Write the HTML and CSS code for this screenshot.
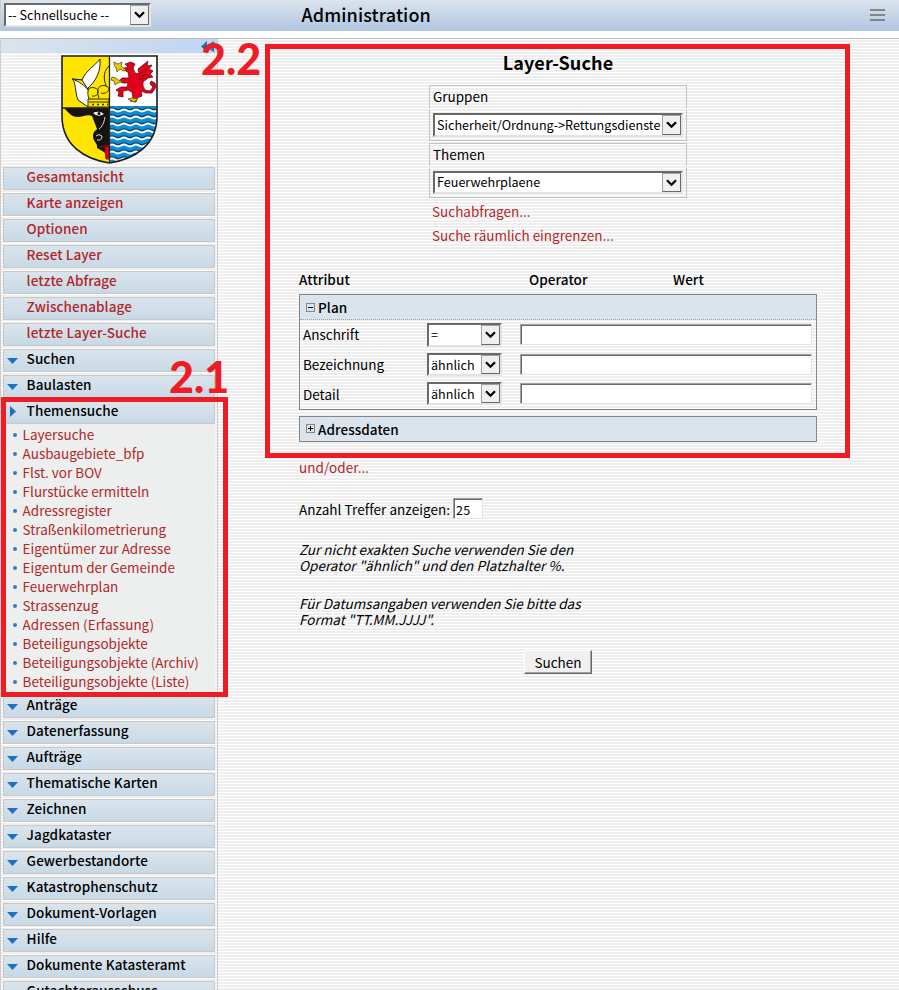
FILE: index.html
```html
<!DOCTYPE html>
<html lang="de">
<head>
<meta charset="utf-8">
<title>Administration</title>
<link rel="stylesheet" href="styles.css">
</head>
<body>
<svg class="defs" width="0" height="0"><defs>
<symbol id="chev" viewBox="0 0 11 8"><path d="M1 1.2 5.5 5.7 10 1.2" fill="none" stroke="#000" stroke-width="2.3"/></symbol>
<symbol id="down" viewBox="0 0 11 6"><path d="M0 0H11L5.5 6z" fill="#1f6fc4"/></symbol>
</defs></svg>
<header class="top">
  <div class="select quick"><span>-- Schnellsuche --</span><i><svg><use href="#chev"/></svg></i></div>
  <h1>Administration</h1>
  <div class="burger"><b></b><b></b><b></b></div>
</header>
<div class="body">
  <aside class="side">
    <div class="strip"><svg width="14" height="11" viewBox="0 0 14 11"><path d="M6 0 0 5.500 6 11V7.500H7L13 11V7L11 5.500 13 4V0L7 4V5H6z" fill="#1f6fc4"/></svg></div>
    <div class="crest">
      <svg width="98" height="110" viewBox="0 0 98 110">
        <defs><clipPath id="shield"><path d="M1 1H96V61C96 90 74 104 48.500 108C23 104 1 90 1 61z"/></clipPath></defs>
        <g clip-path="url(#shield)">
          <path d="M0 0H49V110H0z" fill="#ffe500"/><path d="M48 0H98V52H48z" fill="#fff"/><path d="M48 51H98V110H48z" fill="#0b8ed8"/>
          <g fill="none" stroke="#15405c" stroke-width="1.600">
            <path id="w" d="M48 54q3-1.800 6 0t6 0 6 0 6 0 6 0 6 0 6 0 6 0"/>
            <use href="#w" y="7"/><use href="#w" y="14"/><use href="#w" y="21"/><use href="#w" y="28"/><use href="#w" y="35"/><use href="#w" y="42"/><use href="#w" y="49"/>
          </g>
          <g fill="none" stroke="#fff" stroke-width="2">
            <path id="v" d="M48 55.500q3-1.800 6 0t6 0 6 0 6 0 6 0 6 0 6 0 6 0"/>
            <use href="#v" y="7"/><use href="#v" y="14"/><use href="#v" y="21"/><use href="#v" y="28"/><use href="#v" y="35"/><use href="#v" y="42"/><use href="#v" y="49"/>
          </g>
          <path d="M39 4C34 11 25 15 21 25L11 24C15 26 14 38 17 45L27 52 29 42 27 33C35 26 40 16 39 4z" fill="#fff" stroke="#222" stroke-width="1"/>
          <path d="M11 24C19 27 23 30 28 36L21 25z" fill="#ffe500" stroke="#222"/>
          <path d="M48 11C41 18 43 26 46 33" fill="none" stroke="#222"/>
          <path d="M27 44H48V52H27z" fill="#ffe500" stroke="#332d00"/>
          <path d="M28 44C25 35 28 31 34 33S37 42 31 41M38 43C34 33 39 29 45 31S46 40 40 38" fill="#ffe500" stroke="#332d00"/>
          <path d="M28 47H48" stroke="#332d00"/>
          <path d="M31 49.500H47" stroke="#332d00" stroke-width="1.500" stroke-dasharray="2 3"/>
          <path d="M3 53H48V103L43 97 36 93C37 88 32 87 32 81C32 76 36 75 36 74L31 61C27 59 22 62 17 62C10 62 7 57 3 53z" fill="#161413"/>
          <path d="M32 58q6-3 11 1q-6 4-11-1z" fill="#fff"/><circle cx="38" cy="58.500" r="1.500"/>
          <path d="M44 62C43 68 41 72 38 74M35 81q3-3 6 0q0 5-5 4" fill="none" stroke="#ddd" stroke-width="1"/>
          <path d="M44 92H48V104H45zM39 92l9-2" fill="#e30613" stroke="#b00" stroke-width="1"/>
          <path d="M64 9 70 7 74 9 72 13 74 18 78 19 77 14 82 10 87 6 86 11 91 10 88 14 92 16 89 19 92 22 87 23 82 27 82 31 84 35 89 36 92 32 89 29 90 26 94 28 95 32 91 38 85 38 80 36 81 41 76 43 75 47 69 46 72 43 71 37 67 35 62 36 62 42 57 41 58 37 55 35 60 32 66 32 67 28 62 28 58 26 61 23 68 23 67 17 60 14 67 12z" fill="#e3001b" stroke="#611" stroke-width=".8"/>
          <path d="M77 20l9-6M78 22l9-3M77 25l7-2" stroke="#711" stroke-width=".8"/>
          <path d="M53 7l4 2 4-2-1 4 5 4-2 1-4-2-3 3-1-4-2-3zM51 22l4 1 2 2 5 1-5 2-3 2-1-4-3-1zM67 44l4-1 6 1-4 3z" fill="#e8c600" stroke="#554600" stroke-width=".7"/>
        </g>
        <path d="M48.500 1V108M1 53H48" stroke="#222" stroke-width="1.300"/>
        <path d="M1 1H96V61C96 90 74 104 48.500 108C23 104 1 90 1 61z" fill="none" stroke="#1c1c1c" stroke-width="1.600"/>
      </svg>
    </div>
    <nav class="menu">
      <a class="item link">Gesamtansicht</a>
      <a class="item link">Karte anzeigen</a>
      <a class="item link">Optionen</a>
      <a class="item link">Reset Layer</a>
      <a class="item link">letzte Abfrage</a>
      <a class="item link">Zwischenablage</a>
      <a class="item link">letzte Layer-Suche</a>
      <a class="item"><svg><use href="#down"/></svg>Suchen</a>
      <a class="item"><svg><use href="#down"/></svg>Baulasten</a>
      <a class="item open"><svg viewBox="0 0 6 11"><path d="M0 0V11L6 5.500z" fill="#1f6fc4"/></svg>Themensuche</a>
      <ul class="sub">
        <li>Layersuche</li><li>Ausbaugebiete_bfp</li><li>Flst. vor BOV</li><li>Flurstücke ermitteln</li><li>Adressregister</li><li>Straßenkilometrierung</li><li>Eigentümer zur Adresse</li><li>Eigentum der Gemeinde</li><li>Feuerwehrplan</li><li>Strassenzug</li><li>Adressen (Erfassung)</li><li>Beteiligungsobjekte</li><li>Beteiligungsobjekte (Archiv)</li><li>Beteiligungsobjekte (Liste)</li>
      </ul>
      <a class="item"><svg><use href="#down"/></svg>Anträge</a>
      <a class="item"><svg><use href="#down"/></svg>Datenerfassung</a>
      <a class="item"><svg><use href="#down"/></svg>Aufträge</a>
      <a class="item"><svg><use href="#down"/></svg>Thematische Karten</a>
      <a class="item"><svg><use href="#down"/></svg>Zeichnen</a>
      <a class="item"><svg><use href="#down"/></svg>Jagdkataster</a>
      <a class="item"><svg><use href="#down"/></svg>Gewerbestandorte</a>
      <a class="item"><svg><use href="#down"/></svg>Katastrophenschutz</a>
      <a class="item"><svg><use href="#down"/></svg>Dokument-Vorlagen</a>
      <a class="item"><svg><use href="#down"/></svg>Hilfe</a>
      <a class="item"><svg><use href="#down"/></svg>Dokumente Katasteramt</a>
      <a class="item"><svg><use href="#down"/></svg>Gutachterausschuss</a>
    </nav>
  </aside>
  <main class="main">
    <h2>Layer-Suche</h2>
    <div class="groups">
      <div class="cap">Gruppen</div>
      <div class="cell"><div class="select wide"><span>Sicherheit/Ordnung-&gt;Rettungsdienste</span><i><svg><use href="#chev"/></svg></i></div></div>
      <div class="cap">Themen</div>
      <div class="cell second"><div class="select wide"><span>Feuerwehrplaene</span><i><svg><use href="#chev"/></svg></i></div></div>
      <a class="more">Suchabfragen...</a>
      <a class="more">Suche räumlich eingrenzen...</a>
    </div>
    <div class="heads"><b>Attribut</b><b>Operator</b><b>Wert</b></div>
    <section class="panel">
      <div class="ptitle dotted"><span class="sq"></span>Plan</div>
      <div class="row r1"><label>Anschrift</label><div class="select op"><span>=</span><i><svg><use href="#chev"/></svg></i></div><div class="input"></div></div>
      <div class="row r2"><label>Bezeichnung</label><div class="select op"><span>ähnlich</span><i><svg><use href="#chev"/></svg></i></div><div class="input"></div></div>
      <div class="row r3"><label>Detail</label><div class="select op"><span>ähnlich</span><i><svg><use href="#chev"/></svg></i></div><div class="input"></div></div>
    </section>
    <section class="panel"><div class="ptitle low"><span class="sq plus"></span>Adressdaten</div></section>
    <a class="andor">und/oder...</a>
    <div class="count"><span>Anzahl Treffer anzeigen:</span><div class="input num">25</div></div>
    <p>Zur nicht exakten Suche verwenden Sie den<br>Operator "ähnlich" und den Platzhalter %.</p>
    <p>Für Datumsangaben verwenden Sie bitte das<br>Format "TT.MM.JJJJ".</p>
    <button>Suchen</button>
  </main>
</div>
<div class="mark m1"><span>2.1</span></div>
<div class="mark m2"><span>2.2</span></div>
</body>
</html>
```
FILE: styles.css
```css
* { box-sizing: border-box; }
body { margin: 0; height: 990px; overflow: hidden; position: relative; font: 13.5px/18px "Noto Sans CJK JP", sans-serif; color: #000; }
.defs { position: absolute; }
h1, h2, p, ul { margin: 0; padding: 0; }
.top { height: 31px; display: flex; background: linear-gradient(#dae4ec, #b1c5e1); border-left: 1px solid #ccc; padding: 3px 14px 0 3px; }
.top h1 { font-size: 18px; font-weight: 500; line-height: 22px; margin-left: 150.5px; flex: 1; letter-spacing: 0.1px; }
.burger { width: 15px; padding-top: 6px; }
.burger b { display: block; height: 2px; background: #858585; margin-bottom: 3px; }
.select { display: flex; height: 24px; background: #fff; border: 2px solid #696969; border-right-color: #e3e3e3; border-bottom-color: #e3e3e3; font-size: 12.6px; line-height: 19px; }
.select span { flex: 1; padding-left: 2px; white-space: nowrap; overflow: hidden; }
.select i { width: 19px; height: 20px; background: #f0f0f0; border: 1px solid #a0a0a0; border-right-color: #696969; border-bottom-color: #696969; padding: 5px 0 0 3px; line-height: 0; flex: none; }
.select svg { width: 11px; height: 8px; }
.quick { width: 147px; }
.body { margin-top: 7px; height: 952px; border-top: 1px solid #bbb; border-left: 1px solid #ccc; display: flex; background: repeating-linear-gradient(#fff 0 1px, #eee 1px 3px); }
.side { width: 217px; border-right: 1px solid #ccc; overflow: hidden; flex: none; }
.strip { height: 14px; background: linear-gradient(90deg, #dae4ec, #c0d5f3); padding: 2px 0 0 200px; line-height: 0; }
.crest { height: 114px; padding: 2px 0 0 59.5px; line-height: 0; }
.menu { padding-left: 2px; }
.item { display: block; position: relative; width: 212px; height: 23px; margin-bottom: 3px; border: 1px solid #c8c8c8; background: linear-gradient(#dae4ec, #c7d9e6); padding-left: 22.6px; line-height: 16px; font-weight: 500; letter-spacing: 0.08px; }
.item svg { position: absolute; left: 3px; top: 8px; width: 11px; height: 6px; }
.open { margin-bottom: 0; }
.open svg { left: 6px; top: 4px; width: 6px; height: 11px; }
.link, .sub, .more, .andor { color: #b22628; }
.sub { list-style: none; width: 212px; height: 268px; margin-bottom: 3px; padding-top: 1px; background: #edefee; }
.sub li { height: 19px; line-height: 19px; padding-left: 19.6px; position: relative; white-space: nowrap; }
.sub li::before { content: ""; position: absolute; left: 9.5px; top: 7.5px; width: 4px; height: 4px; border-radius: 50%; background: #3578bd; }
.main { padding-left: 81px; width: 599px; }
h2 { font-size: 18px; font-weight: 700; line-height: 24px; height: 46px; padding-top: 11px; text-align: center; letter-spacing: 0.1px; }
.groups { margin-left: 130px; width: 258px; }
.cap { height: 23px; border: 1px solid #c3c3c3; border-bottom: 0; padding-left: 3px; line-height: 20px; margin-bottom: 2px; }
.cell { height: 31px; border: 1px solid #c3c3c3; border-top: 0; padding: 3px 0 0 3px; margin-bottom: 2px; }
.second { height: 30px; }
.second .select { height: 23px; line-height: 17px; }
.second .select i { height: 19px; }
.wide { width: 250px; }
.more { display: block; position: relative; top: -1px; height: 24px; line-height: 24px; padding-left: 3px; }
.heads { display: grid; grid-template-columns: 230px 144px 1fr; height: 46px; padding-top: 22px; }
.heads b { font-weight: 500; line-height: 18px; letter-spacing: 0.08px; }
.panel { width: 518px; border: 1px solid #858585; margin-bottom: 6px; }
.ptitle { height: 24px; display: flex; align-items: center; background: #dae4ec; padding-left: 6px; font-weight: 500; letter-spacing: 0.06px; line-height: 16px; }
.low { padding-bottom: 1px; }
.dotted { height: 25px; border-bottom: 1px dotted #8ea2ba; }
.sq { width: 9px; height: 9px; border: 1px solid #858585; margin-right: 3px; background: linear-gradient(#000, #000) center / 5px 1px no-repeat; }
.plus { background: linear-gradient(#000, #000) center / 5px 1px no-repeat, linear-gradient(#000, #000) center / 1px 5px no-repeat; }
.row { display: grid; grid-template-columns: 124px 93px 292px; height: 30px; padding: 3px 0 0 3px; }
.row label { line-height: 23px; }
.r3 { height: 29px; }
.r2 .select, .r3 .select { height: 23px; }
.r2 .select i, .r3 .select i { height: 19px; }
.r3 { padding-top: 2px; }
.r3 label { line-height: 25px; }
.op { width: 75px; }
.input { height: 21px; margin-top: 1px; background: #fff; border: 1px solid #a0a0a0; border-right-color: #e3e3e3; border-bottom-color: #e3e3e3; box-shadow: inset 1px 1px #696969; }
.andor { display: block; margin-top: 16px; line-height: 18px; letter-spacing: 0.08px; }
.count { display: flex; margin-top: 21px; line-height: 24px; letter-spacing: 0.06px; }
.num { width: 30px; height: 21px; margin: 1px 0 0 3px; padding-left: 2px; line-height: 22px; font-size: 12.6px; }
p { height: 32px; font-style: italic; line-height: 16px; font-size: 13.5px; margin-top: 22px; white-space: nowrap; letter-spacing: 0.02px; }
.count + p { margin-top: 20px; }
button { display: block; margin: 23px 0 0 225px; width: 68px; height: 24px; padding: 0; background: #f0f0f0; border: 1px solid #fff; border-right-color: #696969; border-bottom-color: #696969; box-shadow: inset -1px -1px #a0a0a0; font: 13.5px/20px "Noto Sans CJK JP", sans-serif; }
.mark { position: absolute; border: 5px solid #ee1c24; color: #ee1c24; }
.mark span { position: absolute; font: 900 43px/44px Lato, sans-serif; }
.m1 { left: 1px; top: 397px; width: 227px; height: 300px; }
.m1 span { left: 163px; top: -47px; }
.m2 { left: 265px; top: 44px; width: 585px; height: 414px; }
.m2 span { left: -69px; top: -12px; }
```
